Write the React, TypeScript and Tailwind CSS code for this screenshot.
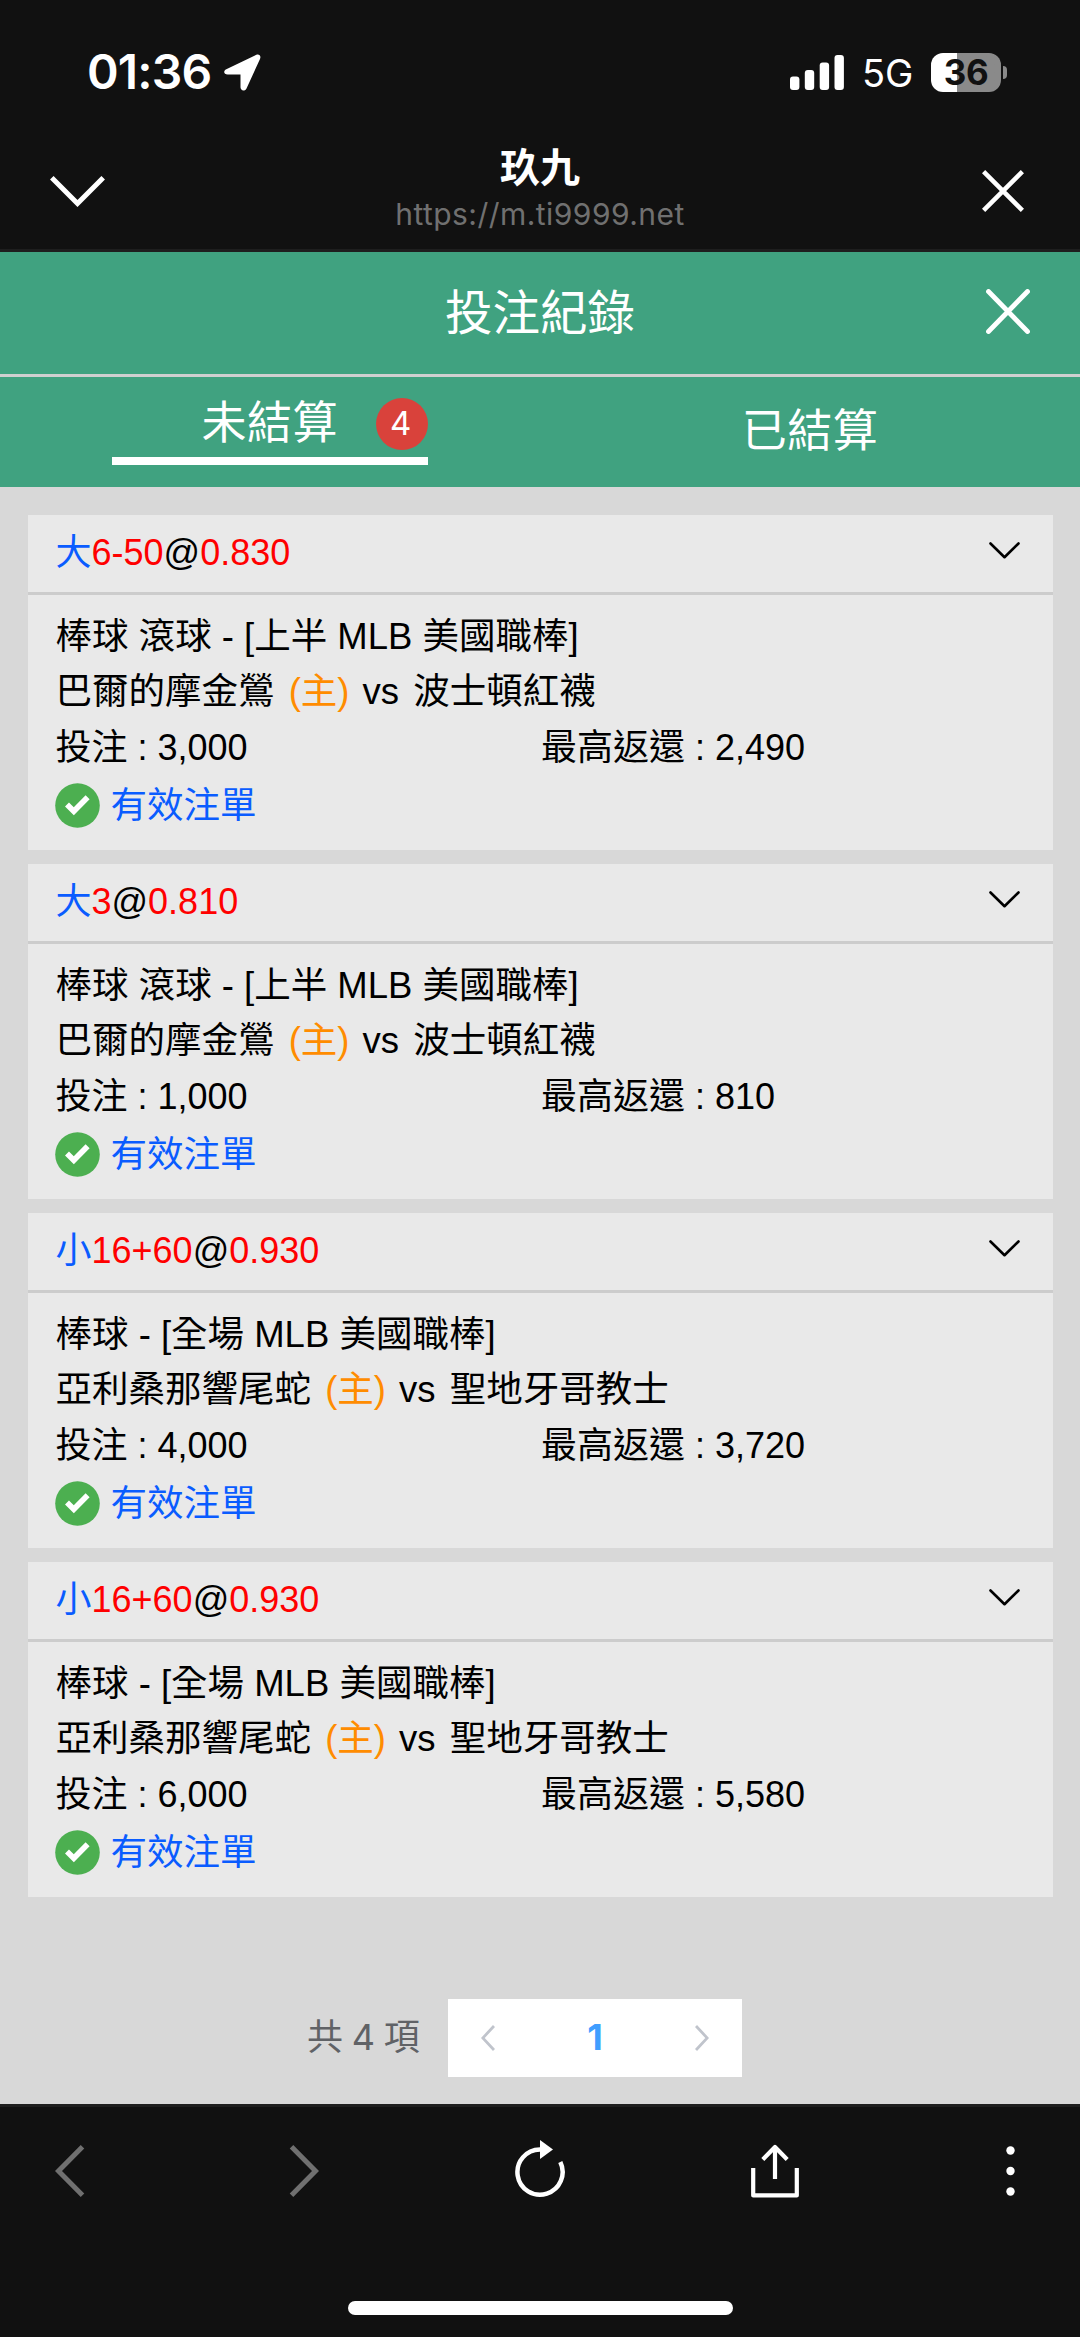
import { useState } from "react"
import clsx from "clsx";

type Bet = {
    id: number,
    side: string,
    line: string,
    odds: string,
    league: string,
    home: string,
    away: string,
    stake: string,
    payout: string,
}

const bets: Bet[] = [
    { id: 1, side: "大", line: "6-50", odds: "0.830", league: "棒球 滾球 - [上半 MLB 美國職棒]", home: "巴爾的摩金鶯", away: "波士頓紅襪", stake: "3,000", payout: "2,490" },
    { id: 2, side: "大", line: "3", odds: "0.810", league: "棒球 滾球 - [上半 MLB 美國職棒]", home: "巴爾的摩金鶯", away: "波士頓紅襪", stake: "1,000", payout: "810" },
    { id: 3, side: "小", line: "16+60", odds: "0.930", league: "棒球 - [全場 MLB 美國職棒]", home: "亞利桑那響尾蛇", away: "聖地牙哥教士", stake: "4,000", payout: "3,720" },
    { id: 4, side: "小", line: "16+60", odds: "0.930", league: "棒球 - [全場 MLB 美國職棒]", home: "亞利桑那響尾蛇", away: "聖地牙哥教士", stake: "6,000", payout: "5,580" },
]

const StatusBar = () => {
    return <div className="flex items-center justify-between h-[144px] pl-[87px] pr-[73px] text-white">
        <div className="flex items-center">
            <span className="w-[137px] text-[48px] font-semibold leading-none tracking-[-0.8px]">01:36</span>
            <svg className="w-[37px] h-[37px]" viewBox="0 0 37 37" fill="currentColor">
                <path d="M2.3 15.2 32 .9c3-1.4 5.4.9 4 4L22.5 34.4c-1.5 3.2-6 2.6-6-1.1V20.5H3.7C-.4 20.5-.9 16.7 2.3 15.2Z" />
            </svg>
        </div>
        <div className="flex items-center">
            <svg className="w-[54px] h-[35px]" viewBox="0 0 54 35" fill="currentColor">
                <rect x="0" y="21.5" width="9.4" height="13.5" rx="3" />
                <rect x="14.8" y="15" width="9.4" height="20" rx="3" />
                <rect x="29.7" y="7.5" width="9.4" height="27.5" rx="3" />
                <rect x="44.5" y="0" width="9.4" height="35" rx="3" />
            </svg>
            <span className="ml-[18px] mt-[2px] w-[69px] text-[38px] leading-none">5G</span>
            <div className="flex items-center justify-center w-[70px] h-[39px] rounded-[12px] bg-linear-to-r from-white from-[37%] to-[#8a8a8a] to-[37%]">
                <span className="text-[35px] font-bold leading-none tracking-[-0.5px] text-[#111]">36</span>
            </div>
            <div className="ml-[2px] w-[4px] h-[13px] rounded-r-full bg-[#8a8a8a]" />
        </div>
    </div>
}

const BrowserHeader = () => {
    return <header className="grid grid-cols-[1fr_auto_1fr] items-start h-[108px] px-[50px] text-white border-b-[3px] border-[#1e1e1e]">
        <svg className="mt-[32px] w-[56px] h-[31px]" viewBox="0 0 56 31" fill="none" stroke="currentColor" strokeWidth="5">
            <path d="M1.8 1.8 27.5 27.5 53.2 1.8" />
        </svg>
        <div className="flex flex-col items-center">
            <span className="text-[40px] font-bold leading-[48px]">玖九</span>
            <span className="text-[30px] leading-[45px] tracking-[0.45px] text-[#707070]">https://m.ti9999.net</span>
        </div>
        <svg className="justify-self-end mt-[26px] mr-[6px] w-[42px] h-[42px]" viewBox="0 0 42 42" fill="none" stroke="currentColor" strokeWidth="4.5">
            <path d="M1.6 1.6 40.4 40.4M40.4 1.6 1.6 40.4" />
        </svg>
    </header>
}

const StatusIcon = () => {
    return <svg className="w-[45px] h-[45px]" viewBox="0 0 45 45">
        <circle cx="22.5" cy="22.5" r="22.3" fill="#4caf50" />
        <path d="M12 21.5 18.8 28.3 32.6 14.2" fill="none" stroke="#fff" strokeWidth="5.6" />
    </svg>
}

const BetCard = ({ bet }: { bet: Bet }) => {
    return <article className="h-[335px] bg-[#e9e9e9] text-black text-[36.5px] leading-[55.4px]">
        <div className="flex items-center justify-between h-[80px] pl-[28px] pr-[33px] border-b-[3px] border-[#ccc]">
            <span className="pb-[2px] text-[36px] text-[#0a5cff]">{bet.side}<span className="text-[#f00]">{bet.line}</span><span className="text-black">@</span><span className="text-[#f00]">{bet.odds}</span></span>
            <svg className="mb-[7px] w-[31px] h-[17px]" viewBox="0 0 31 17" fill="none" stroke="currentColor" strokeWidth="2.6" strokeLinecap="round" strokeLinejoin="round">
                <path d="M1.5 1.5 15.5 15.2 29.5 1.5" />
            </svg>
        </div>
        <div className="px-[28px] pt-[14px]">
            <p>{bet.league}</p>
            <p>{bet.home} <span className="ml-[4px] mr-[3px] text-[#ff8c00]">(主)</span> vs <span className="ml-[4px]">{bet.away}</span></p>
            <div className="grid grid-cols-2 text-[36px]">
                <span>投注 : {bet.stake}</span>
                <span className="pl-[1px]">最高返還 : {bet.payout}</span>
            </div>
            <div className="flex items-center gap-[11px] mt-[3px] -ml-[1px] text-[#0a5cff]">
                <StatusIcon />
                <span>有效注單</span>
            </div>
        </div>
    </article>
}

const Pagination = () => {
    return <div className="flex items-center mt-[102px] ml-[307px] text-[36px] text-[#606266]">
        <span className="w-[141px] pb-[2px] tracking-[-0.7px] whitespace-nowrap">共 4 項</span>
        <div className="flex items-center justify-between w-[294px] h-[78px] px-[33px] bg-white text-[#c0c4cc]">
            <svg className="w-[14px] h-[26px]" viewBox="0 0 14 26" fill="none" stroke="currentColor" strokeWidth="2.8">
                <path d="M13 1 1.8 13 13 25" />
            </svg>
            <span className="pb-[2px] font-bold leading-none text-[#409eff]">1</span>
            <svg className="w-[14px] h-[26px]" viewBox="0 0 14 26" fill="none" stroke="currentColor" strokeWidth="2.8">
                <path d="M1 1 12.2 13 1 25" />
            </svg>
        </div>
    </div>
}

const BrowserToolbar = () => {
    return <footer className="flex flex-col items-center h-[233px] bg-[#111] text-white border-t-[3px] border-[#1e1e1e]">
        <div className="flex items-center w-full mt-[33px] h-[62px] pl-[55px]">
            <svg className="w-[30px] h-[52px] text-[#707070]" viewBox="0 0 30 52" fill="none" stroke="currentColor" strokeWidth="5">
                <path d="M27.5 1.8 3.5 26 27.5 50.2" />
            </svg>
            <svg className="ml-[204px] w-[30px] h-[52px] text-[#707070]" viewBox="0 0 30 52" fill="none" stroke="currentColor" strokeWidth="5">
                <path d="M2.5 1.8 26.5 26 2.5 50.2" />
            </svg>
            <svg className="ml-[195px] w-[52px] h-[62px]" viewBox="0 0 52 62" fill="none">
                <path d="M26 9.5a22.6 22.6 0 1 0 20.3 12.6" stroke="currentColor" strokeWidth="4.5" />
                <path d="M26 0 39 9.5 26 19Z" fill="currentColor" />
            </svg>
            <svg className="ml-[185px] w-[48px] h-[54px]" viewBox="0 0 48 54" fill="none" stroke="currentColor" strokeWidth="4.2">
                <path d="M2.2 24v27.400h43.600V24M24 35V3M11.800 15.500 24 3l12.200 12.500" strokeLinejoin="round" />
            </svg>
            <svg className="ml-[207px] w-[9px] h-[50px]" viewBox="0 0 9 50" fill="currentColor">
                <circle cx="4.5" cy="4.5" r="4.2" />
                <circle cx="4.5" cy="25" r="4.2" />
                <circle cx="4.5" cy="45.5" r="4.2" />
            </svg>
        </div>
        <div className="mt-[99px] w-[385px] h-[14px] rounded-full bg-white" />
    </footer>
}

const App = () => {
    const [settled, setSettled] = useState(false);

    const tabClass = "flex h-full w-1/2 justify-center";

    return (
        <div className="flex flex-col w-[1080px] h-[2337px] bg-[#d8d8d8] font-['Inter','Noto_Sans_CJK_TC',sans-serif]">
            <div className="bg-[#111]">
                <StatusBar />
                <BrowserHeader />
            </div>
            <div className="bg-[#40a280] text-white">
                <div className="grid grid-cols-[1fr_auto_1fr] items-center h-[125px] border-b-[3px] border-[#d0d0d0]">
                    <h1 className="col-start-2 text-[47.5px] leading-none">投注紀錄</h1>
                    <svg className="justify-self-end mb-[4px] mr-[50px] w-[44px] h-[45px]" viewBox="0 0 44 45" fill="none" stroke="currentColor" strokeWidth="4.8" strokeLinecap="round">
                        <path d="M2.5 2.5 41.5 42.5M41.5 2.5 2.5 42.5" />
                    </svg>
                </div>
                <div className="flex h-[110px] text-[45px] leading-none tracking-[0.5px]">
                    <button className={tabClass} onClick={() => setSettled(false)}>
                        <span className={clsx("flex items-center justify-end w-[316px] h-[88px] pt-[13px]", !settled && "border-b-[8px] border-white")}>
                            <span className="pb-[3px]">未結算</span>
                            <span className="flex items-center justify-center ml-[38px] size-[52px] pr-[2px] rounded-full bg-[#d9423b] text-[33px]">4</span>
                        </span>
                    </button>
                    <button className={tabClass} onClick={() => setSettled(true)}>
                        <span className={clsx("flex items-center justify-center w-[316px] h-[106px]", settled && "border-b-[8px] border-white")}>已結算</span>
                    </button>
                </div>
            </div>
            <main className="flex-1">
                <div className="flex flex-col gap-[14px] mt-[28px] mx-[27.5px] font-['Liberation_Sans','Noto_Sans_CJK_TC',sans-serif]">
                    {bets.map((bet) => <BetCard key={bet.id} bet={bet} />)}
                </div>
                <Pagination />
            </main>
            <BrowserToolbar />
        </div>
    )
}

export default App;
